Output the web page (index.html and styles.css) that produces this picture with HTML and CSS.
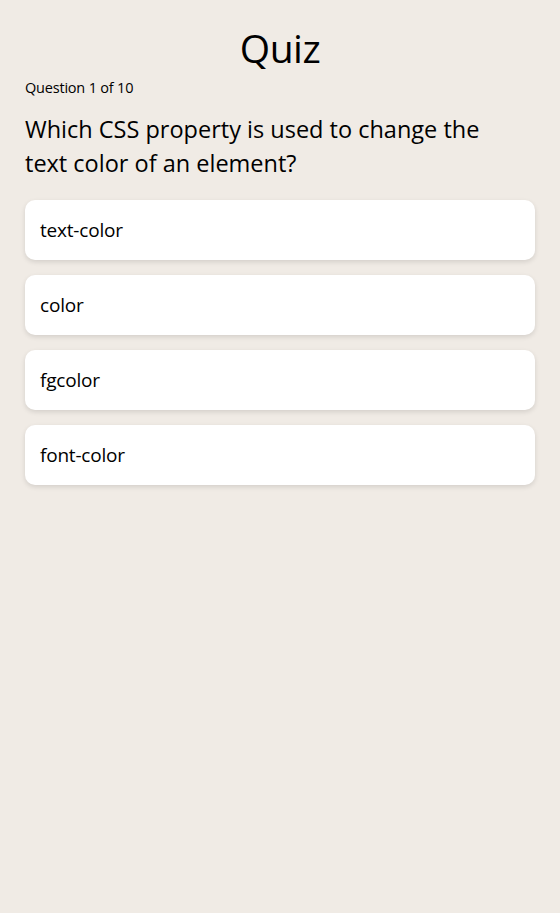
FILE: index.html
```html
<!DOCTYPE html>
<html lang="en">
<head>
<meta charset="utf-8">
<title>Quiz</title>
<link rel="stylesheet" href="styles.css">
</head>
<body>
<main class="quiz">
  <h1 class="title">Quiz</h1>
  <p class="progress">Question 1 of 10</p>
  <h2 class="question">Which CSS property is used to change the text color of an element?</h2>
  <div class="options">
    <button class="option">text-color</button>
    <button class="option">color</button>
    <button class="option">fgcolor</button>
    <button class="option">font-color</button>
  </div>
</main>
</body>
</html>
```

FILE: styles.css
```css
html, body {
  margin: 0;
  padding: 0;
  background: #f0ebe5;
}
body {
  font-family: "Open Sans", "Noto Sans", sans-serif;
  color: #000;
}
.quiz {
  padding: 20px 25px;
}
.title {
  margin: 0 0 2px;
  text-align: center;
  font-size: 39px;
  font-weight: 400;
  line-height: 56px;
  letter-spacing: -0.5px;
}
.progress {
  margin: 0;
  font-size: 14.5px;
  line-height: 20px;
  letter-spacing: -0.2px;
}
.question {
  max-width: 490px;
  margin: 14px 0 20px;
  font-size: 23.5px;
  font-weight: 400;
  line-height: 34px;
  letter-spacing: 0;
}
.options {
  display: flex;
  flex-direction: column;
  gap: 15px;
}
.option {
  display: block;
  width: 100%;
  height: 60px;
  padding: 0 15px;
  border: none;
  border-radius: 10px;
  background: #fff;
  box-shadow: 0 2px 5px rgba(0, 0, 0, 0.12);
  text-align: left;
  font-family: inherit;
  font-size: 19px;
  letter-spacing: -0.2px;
  color: #000;
}
```
